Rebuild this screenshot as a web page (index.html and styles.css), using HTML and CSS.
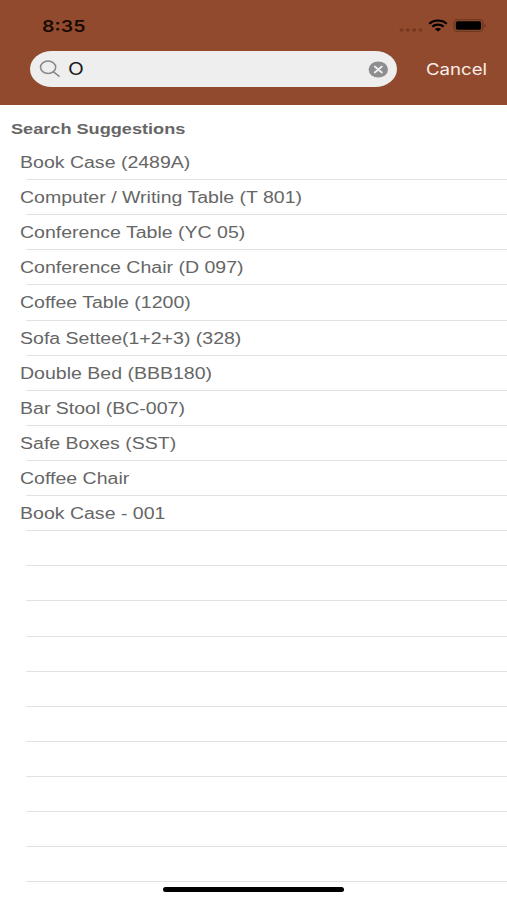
FILE: index.html
```
<!DOCTYPE html>
<html lang="en">
<head>
  <meta charset="UTF-8">
  <title>Search</title>
  <meta name="viewport" content="width=device-width, initial-scale=1.0">
  <link rel="stylesheet" href="styles.css">
</head>
<body>
  <header>
    <div class="status-bar">
      <span class="time wide">8:35</span>
      <div class="status-icons">
        <svg class="signal" width="24" height="6" viewBox="0 0 24 6">
          <ellipse cx="2.5" cy="3" rx="2" ry="1.7"/>
          <ellipse cx="8.9" cy="3" rx="2" ry="1.7"/>
          <ellipse cx="15.2" cy="3" rx="2" ry="1.7"/>
          <ellipse cx="21.5" cy="3" rx="2" ry="1.7"/>
        </svg>
        <svg class="wifi" width="20" height="13" viewBox="0 0 20 13">
          <path d="M1.2 4.7C6 .5 14 .5 18.8 4.7M4.3 7.6c3.2-2.7 8.2-2.7 11.4 0" fill="none" stroke="#000" stroke-width="2.1"/>
          <path d="M6.8 9.9c1.8-1.3 4.6-1.3 6.4 0L10 12.6z"/>
        </svg>
        <svg class="battery" width="34" height="13" viewBox="0 0 34 13">
          <rect x=".9" y=".7" width="29" height="11.6" rx="3.6" fill="none" stroke="#6d3a22" stroke-width="1.3"/>
          <rect x="2.8" y="2.3" width="25.3" height="8.5" rx="1.8"/>
          <path d="M31.3 4.5c2.4.9 2.4 3.2 0 4z" fill="#6d3a22"/>
        </svg>
      </div>
    </div>
    <div class="search-row">
      <div class="search-field">
        <svg class="glass" width="22" height="18" viewBox="0 0 22 18">
          <ellipse cx="9.1" cy="7.3" rx="7.6" ry="6.2"/>
          <path d="M14.5 11.8l5.5 4.4"/>
        </svg>
        <span class="query wide">O</span>
        <svg class="clear" width="20" height="17" viewBox="0 0 20 17">
          <ellipse cx="10.3" cy="8.5" rx="9.7" ry="8.1" fill="#8e8e90"/>
          <path d="M6.8 5.5l7 6M13.8 5.5l-7 6" stroke="#f0f0f0" stroke-width="1.8" stroke-linecap="round"/>
        </svg>
      </div>
      <span class="cancel wide">Cancel</span>
    </div>
  </header>

  <main>
    <h1><span class="wide">Search Suggestions</span></h1>
    <ul class="suggestions">
      <li><span class="wide">Book Case (2489A)</span></li>
      <li><span class="wide">Computer / Writing Table (T 801)</span></li>
      <li><span class="wide">Conference Table (YC 05)</span></li>
      <li><span class="wide">Conference Chair (D 097)</span></li>
      <li><span class="wide">Coffee Table (1200)</span></li>
      <li><span class="wide">Sofa Settee(1+2+3) (328)</span></li>
      <li><span class="wide">Double Bed (BBB180)</span></li>
      <li><span class="wide">Bar Stool (BC-007)</span></li>
      <li><span class="wide">Safe Boxes (SST)</span></li>
      <li><span class="wide">Coffee Chair</span></li>
      <li><span class="wide">Book Case - 001</span></li>
      <li></li>
      <li></li>
      <li></li>
      <li></li>
      <li></li>
      <li></li>
      <li></li>
      <li></li>
      <li></li>
      <li></li>
    </ul>
  </main>

  <div class="home-indicator"></div>
</body>
</html>
```

FILE: styles.css
```
* {
  box-sizing: border-box;
}

body {
  margin: 0;
  height: 900px;
  overflow: hidden;
  background: #fff;
  color: #666;
  font-family: "Liberation Sans", Arial, sans-serif;
}

svg {
  display: block;
  flex: none;
}

/* extended letterforms */
.wide {
  display: inline-block;
  white-space: nowrap;
  transform: scaleX(1.22);
  transform-origin: left center;
}

header {
  height: 105px;
  background: #914a2e;
}

.status-bar {
  display: flex;
  justify-content: space-between;
  height: 51px;
  padding: 16px 20px 0 42px;
}

.time {
  font-family: Inter, sans-serif;
  font-size: 16px;
  font-weight: 600;
  line-height: 20px;
  color: #1a0a04;
}

.status-icons {
  display: flex;
  align-items: flex-start;
  padding-top: 3px;
}

.signal {
  margin: 8px 4px 0 0;
  fill: #75391f;
}

.wifi {
  margin: 0 5px 0 1px;
}

.search-row {
  display: flex;
  align-items: center;
  padding-left: 30px;
}

.search-field {
  display: flex;
  align-items: center;
  width: 367px;
  height: 36px;
  padding: 0 9px;
  border-radius: 22px / 18px;
  background: #eee;
}

.glass {
  fill: none;
  stroke: #88888a;
  stroke-width: 1.5;
  stroke-linecap: round;
}

.query {
  flex: 1;
  margin: -1px 0 0 7px;
  font-family: Inter, sans-serif;
  font-size: 17px;
  color: #1c1c1c;
}

.cancel {
  margin-left: 29px;
  font-family: Inter, sans-serif;
  font-size: 16px;
  color: #fbeee8;
  transform: scaleX(1.165);
}

h1 {
  height: 39px;
  margin: 0;
  padding: 14px 0 0 11px;
  font-size: 15.5px;
  line-height: 20px;
}

h1 .wide {
  transform: scaleX(1.17);
}

.suggestions {
  margin: 0;
  padding: 1px 0 0 26px;
  list-style: none;
}

.suggestions li {
  height: 35.12px;
  border-bottom: 1px solid #e2e2e2;
  font-size: 16px;
  line-height: 36px;
}

.suggestions .wide {
  margin-left: -6px;
}

.home-indicator {
  position: absolute;
  left: 163px;
  top: 887px;
  width: 181px;
  height: 5px;
  border-radius: 3px;
  background: #000;
}
```
